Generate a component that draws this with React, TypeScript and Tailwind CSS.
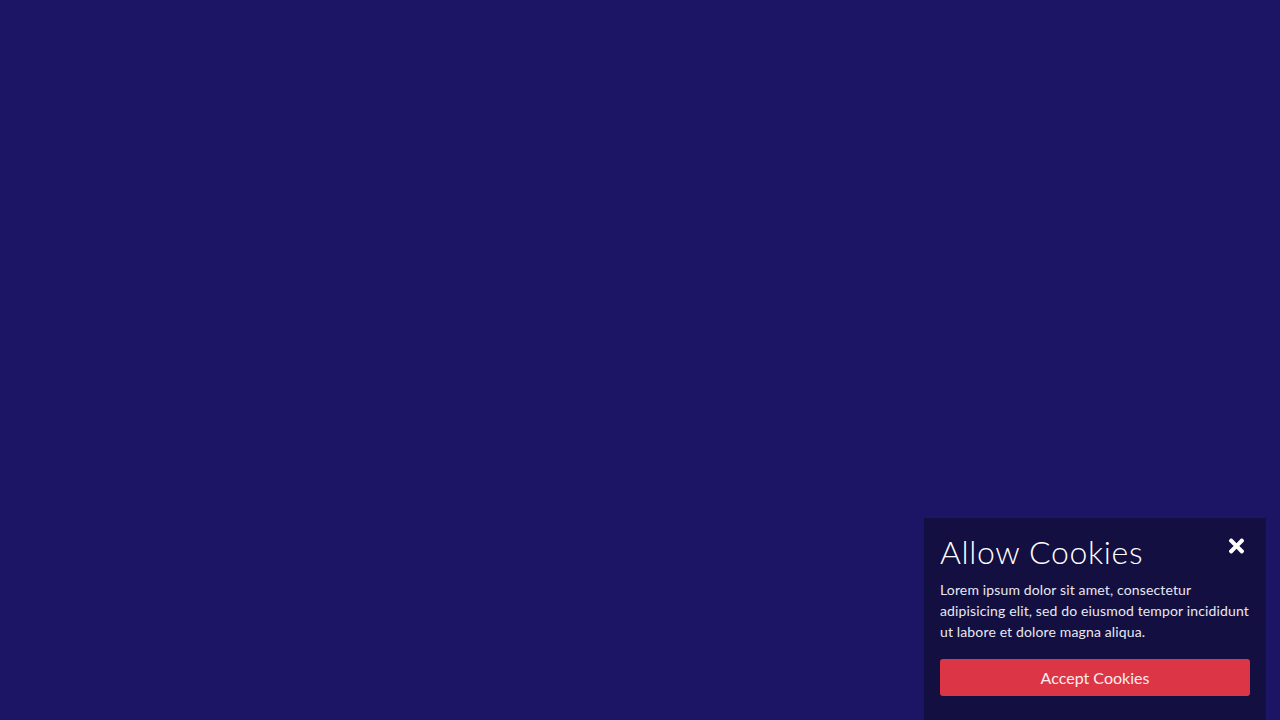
import { FaTimes } from 'react-icons/fa'

export default function App() {
  return (
    <div className="h-screen w-full bg-[#1c1565] relative overflow-hidden" style={{ fontFamily: 'Lato, "Noto Sans", sans-serif' }}>
      <div className="absolute bottom-0 right-[14px] w-[342px] bg-[#130f40] text-white px-4 pt-[15px] pb-6">
        <div className="flex items-start justify-between">
          <h2 className="text-[32px] leading-[38px] font-light tracking-[0.02em]">Allow Cookies</h2>
          <button className="mt-[2px] mr-1 text-white">
            <FaTimes className="w-[19px] h-[22px]" />
          </button>
        </div>
        <p className="mt-[8px] text-[14px] leading-[21px] tracking-[0.01em] text-[#e9e8f0]">
          Lorem ipsum dolor sit amet, consectetur adipisicing elit, sed do eiusmod tempor incididunt ut labore et dolore magna aliqua.
        </p>
        <button className="mt-[17px] w-full h-[37px] rounded-[3px] bg-[#dc3545] text-[#fbeef0] text-[16px] font-normal">
          Accept Cookies
        </button>
      </div>
    </div>
  )
}
